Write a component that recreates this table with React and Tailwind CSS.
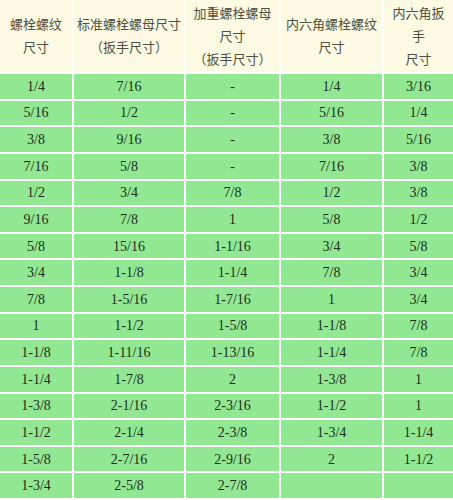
const header = [
  ["螺栓螺纹", "尺寸"],
  ["标准螺栓螺母尺寸", "（扳手尺寸）"],
  ["加重螺栓螺母", "尺寸", "（扳手尺寸）"],
  ["内六角螺栓螺纹", "尺寸"],
  ["内六角扳", "手", "尺寸"],
];

const rows = [
  ["1/4", "7/16", "-", "1/4", "3/16"],
  ["5/16", "1/2", "-", "5/16", "1/4"],
  ["3/8", "9/16", "-", "3/8", "5/16"],
  ["7/16", "5/8", "-", "7/16", "3/8"],
  ["1/2", "3/4", "7/8", "1/2", "3/8"],
  ["9/16", "7/8", "1", "5/8", "1/2"],
  ["5/8", "15/16", "1-1/16", "3/4", "5/8"],
  ["3/4", "1-1/8", "1-1/4", "7/8", "3/4"],
  ["7/8", "1-5/16", "1-7/16", "1", "3/4"],
  ["1", "1-1/2", "1-5/8", "1-1/8", "7/8"],
  ["1-1/8", "1-11/16", "1-13/16", "1-1/4", "7/8"],
  ["1-1/4", "1-7/8", "2", "1-3/8", "1"],
  ["1-3/8", "2-1/16", "2-3/16", "1-1/2", "1"],
  ["1-1/2", "2-1/4", "2-3/8", "1-3/4", "1-1/4"],
  ["1-5/8", "2-7/16", "2-9/16", "2", "1-1/2"],
  ["1-3/4", "2-5/8", "2-7/8", "", ""],
];

export default function App() {
  return (
    <div className="w-[453px] h-[500px] bg-white overflow-hidden">
      <div className="grid grid-cols-[72px_110px_93px_101px_69px] grid-rows-[72px] auto-rows-[24.625px] gap-[2px] bg-white">
        {header.map((lines, i) => (
          <div
            key={"h" + i}
            className="bg-[#fcfae3] flex flex-col items-center justify-center text-[13px] leading-[23px] text-[#4f4f42] whitespace-nowrap"
            style={{ fontFamily: '"Liberation Serif", "Noto Sans CJK SC", serif' }}
          >
            {lines.map((l, j) => (
              <span key={j}>{l}</span>
            ))}
          </div>
        ))}
        {rows.map((r, ri) =>
          r.map((c, ci) => (
            <div
              key={ri + "-" + ci}
              className="bg-[#92e892] flex items-center justify-center text-[14px] text-[#1a2e1c]"
              style={{ fontFamily: '"Liberation Serif", serif' }}
            >
              {c}
            </div>
          ))
        )}
      </div>
    </div>
  );
}
